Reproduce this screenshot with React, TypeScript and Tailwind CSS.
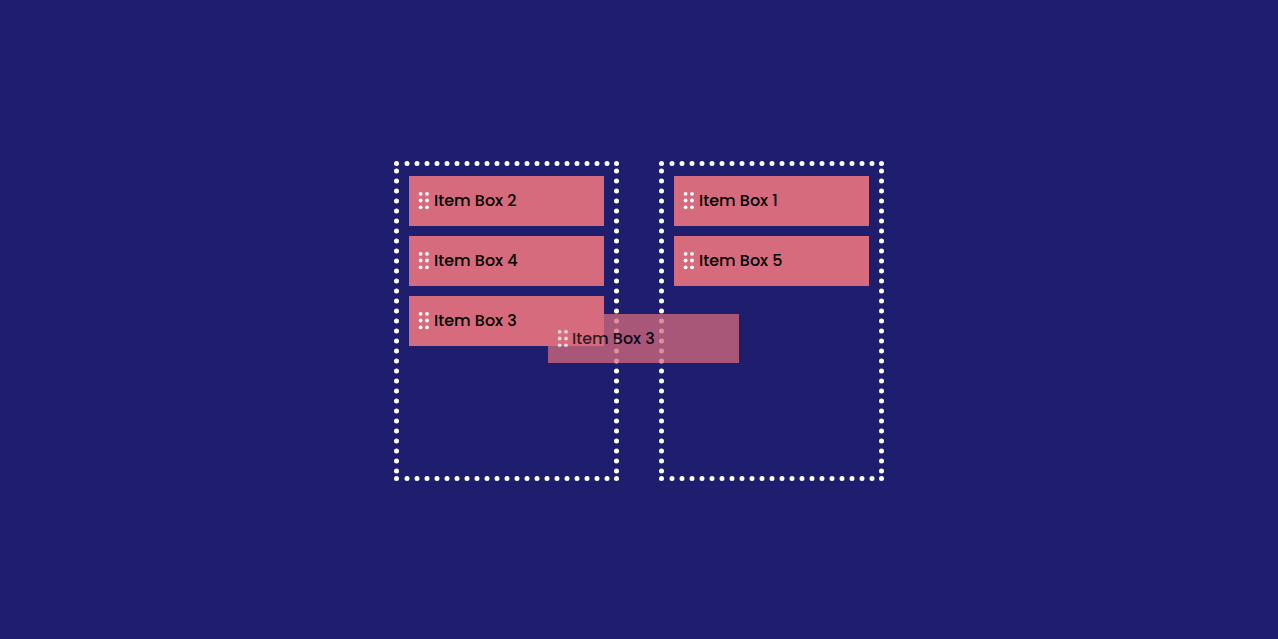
const leftItems = ["Item Box 2", "Item Box 4", "Item Box 3"];
const rightItems = ["Item Box 1", "Item Box 5"];

function Grip() {
  return (
    <svg className="h-5 w-3 shrink-0" viewBox="0 0 12 20" fill="white" aria-hidden="true">
      {[3.6, 10].map((x) =>
        [2.8, 9.5, 16.3].map((y) => <circle key={`${x}-${y}`} cx={x} cy={y} r="1.9" />)
      )}
    </svg>
  );
}

function DottedFrame() {
  const corners = [
    [2.5, 2.5],
    [222.5, 2.5],
    [2.5, 317.5],
    [222.5, 317.5],
  ];
  return (
    <svg
      className="pointer-events-none absolute inset-0 h-full w-full"
      viewBox="0 0 225 320"
      fill="white"
      stroke="white"
      strokeWidth="5"
      strokeLinecap="round"
      strokeDasharray="0 10"
      aria-hidden="true"
    >
      {corners.map(([x, y]) => (
        <circle key={`${x}-${y}`} cx={x} cy={y} r="2.5" stroke="none" />
      ))}
      <path d="M13 2.5H213.1M13 317.5H213.1M2.5 10V310.1M222.5 10V310.1" />
    </svg>
  );
}

function Item({ label }: { label: string }) {
  return (
    <li
      draggable
      className="flex h-[50px] cursor-grab items-center gap-[5px] bg-[#d66b7d] px-2 text-base font-medium text-black"
    >
      <Grip />
      <span>{label}</span>
    </li>
  );
}

function Column({ items }: { items: string[] }) {
  return (
    <div className="relative min-h-80 w-[225px] p-[15px]">
      <DottedFrame />
      <ul className="flex flex-col gap-2.5">
        {items.map((label) => (
          <Item key={label} label={label} />
        ))}
      </ul>
    </div>
  );
}

export default function App() {
  return (
    <main className="flex min-h-screen items-center justify-center bg-[#1f1e6e] pt-[3px] font-[Poppins,Inter,sans-serif]">
      <div className="relative flex gap-10">
        <Column items={leftItems} />
        <Column items={rightItems} />
        <div className="pointer-events-none absolute top-[153px] left-[154px] flex h-[49px] w-[191px] items-center gap-1 bg-[#d66b7d] pl-2 text-base font-medium text-black opacity-75">
          <Grip />
          <span>Item Box 3</span>
        </div>
      </div>
    </main>
  );
}
